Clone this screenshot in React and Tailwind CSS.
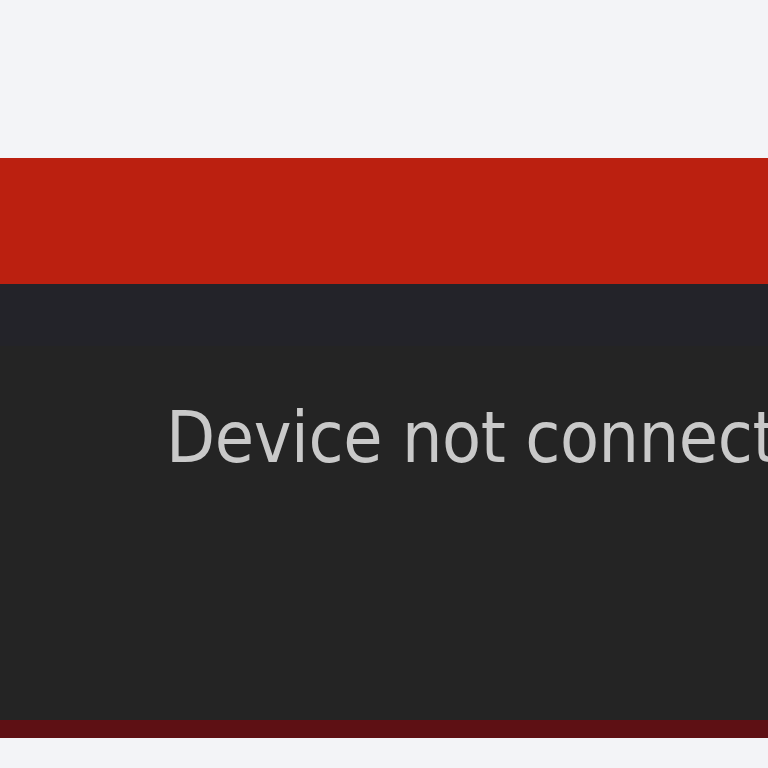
export default function App() {
  return (
    <div className="w-[768px] h-[768px] bg-[#f3f4f7] overflow-hidden flex flex-col">
      <div className="h-[158px] shrink-0" />
      <div className="flex flex-col h-[580px] shrink-0">
        <div className="h-[126px] shrink-0 bg-[#bb2010]" />
        <div className="flex-1 flex flex-col bg-[#242424]">
          <div className="h-[62px] shrink-0 bg-[#232329]" />
          <div className="pl-[166px] pt-[56px] whitespace-nowrap overflow-hidden">
            <span
              className="text-[71px] leading-[71px] tracking-[-0.4px] text-[#c9c9c9] [font-stretch:condensed]"
              style={{ fontFamily: '"DejaVu Sans Condensed", "DejaVu Sans", sans-serif' }}
            >
              Device not connected
            </span>
          </div>
        </div>
        <div className="h-[18px] shrink-0 bg-[#5e1014]" />
      </div>
    </div>
  );
}
